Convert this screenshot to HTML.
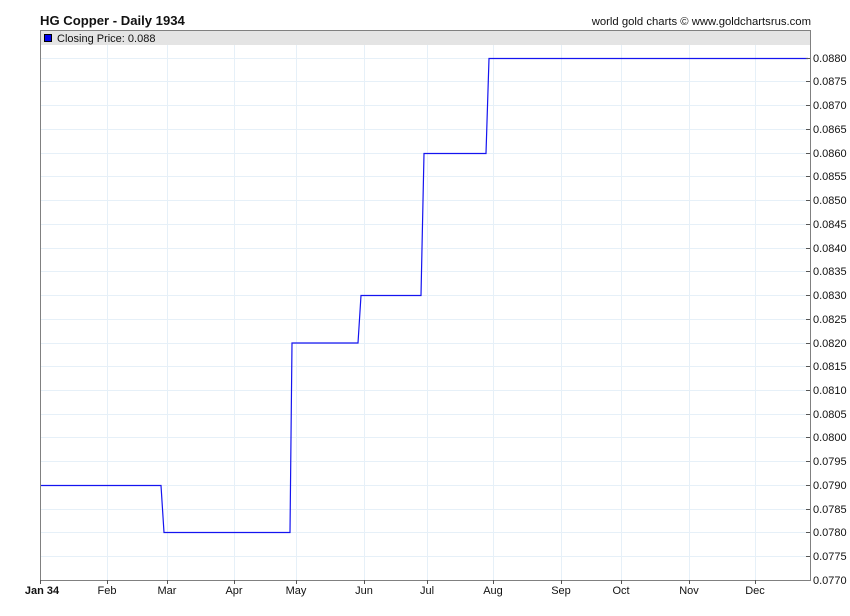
<!DOCTYPE html>
<html><head><meta charset="utf-8"><style>
html,body{margin:0;padding:0;background:#fff;width:850px;height:616px;overflow:hidden}
svg{display:block;font-family:"Liberation Sans",Arial,sans-serif}
</style></head><body>
<svg width="850" height="616" viewBox="0 0 850 616" xmlns="http://www.w3.org/2000/svg">
<text x="40" y="25" font-size="13.1" font-weight="bold" fill="#111">HG Copper - Daily 1934</text>
<text x="811" y="25" font-size="11.3" text-anchor="end" fill="#111">world gold charts © www.goldchartsrus.com</text>
<g stroke="#e6f0f8" stroke-width="1" shape-rendering="crispEdges">
<line x1="107.5" y1="30" x2="107.5" y2="580"/><line x1="167.5" y1="30" x2="167.5" y2="580"/>
<line x1="234.5" y1="30" x2="234.5" y2="580"/><line x1="296.5" y1="30" x2="296.5" y2="580"/>
<line x1="364.5" y1="30" x2="364.5" y2="580"/><line x1="427.5" y1="30" x2="427.5" y2="580"/>
<line x1="493.5" y1="30" x2="493.5" y2="580"/><line x1="561.5" y1="30" x2="561.5" y2="580"/>
<line x1="621.5" y1="30" x2="621.5" y2="580"/><line x1="689.5" y1="30" x2="689.5" y2="580"/>
<line x1="755.5" y1="30" x2="755.5" y2="580"/>
</g>
<rect x="41" y="31" width="769" height="14" fill="#e4e4e4"/>
<rect x="44.5" y="34.5" width="7" height="7" fill="#0000ee" stroke="#000" stroke-width="1"/>
<text x="57" y="42" font-size="11" fill="#111">Closing Price: 0.088</text>
<g stroke="#e6f0f8" shape-rendering="crispEdges">
<line x1="41" x2="810" y1="58.5" y2="58.5"/><line x1="41" x2="810" y1="81.5" y2="81.5"/><line x1="41" x2="810" y1="105.5" y2="105.5"/><line x1="41" x2="810" y1="129.5" y2="129.5"/><line x1="41" x2="810" y1="153.5" y2="153.5"/><line x1="41" x2="810" y1="176.5" y2="176.5"/><line x1="41" x2="810" y1="200.5" y2="200.5"/><line x1="41" x2="810" y1="224.5" y2="224.5"/><line x1="41" x2="810" y1="248.5" y2="248.5"/><line x1="41" x2="810" y1="271.5" y2="271.5"/><line x1="41" x2="810" y1="295.5" y2="295.5"/><line x1="41" x2="810" y1="319.5" y2="319.5"/><line x1="41" x2="810" y1="343.5" y2="343.5"/><line x1="41" x2="810" y1="366.5" y2="366.5"/><line x1="41" x2="810" y1="390.5" y2="390.5"/><line x1="41" x2="810" y1="414.5" y2="414.5"/><line x1="41" x2="810" y1="437.5" y2="437.5"/><line x1="41" x2="810" y1="461.5" y2="461.5"/><line x1="41" x2="810" y1="485.5" y2="485.5"/><line x1="41" x2="810" y1="509.5" y2="509.5"/><line x1="41" x2="810" y1="532.5" y2="532.5"/><line x1="41" x2="810" y1="556.5" y2="556.5"/>
</g>
<path d="M40.5 30.5 V580.5 H810.5 V30.5 Z" fill="none" stroke="#808080" stroke-width="1" shape-rendering="crispEdges"/>
<polyline points="41,485.5 161,485.5 164,532.5 290,532.5 292,343 358,343 361,295.5 421,295.5 424,153.5 486,153.5 489,58.5 808,58.5" fill="none" stroke="#1414f0" stroke-width="1.2"/>
<g stroke="#555" shape-rendering="crispEdges">
<line x1="40.5" y1="580" x2="40.5" y2="584"/><line x1="107.5" y1="580" x2="107.5" y2="584"/><line x1="167.5" y1="580" x2="167.5" y2="584"/><line x1="234.5" y1="580" x2="234.5" y2="584"/><line x1="296.5" y1="580" x2="296.5" y2="584"/><line x1="364.5" y1="580" x2="364.5" y2="584"/><line x1="427.5" y1="580" x2="427.5" y2="584"/><line x1="493.5" y1="580" x2="493.5" y2="584"/><line x1="561.5" y1="580" x2="561.5" y2="584"/><line x1="621.5" y1="580" x2="621.5" y2="584"/><line x1="689.5" y1="580" x2="689.5" y2="584"/><line x1="755.5" y1="580" x2="755.5" y2="584"/>
</g>
<g font-size="11" fill="#111" text-anchor="middle">
<text x="42" y="594" font-weight="bold">Jan 34</text><text x="107" y="594">Feb</text><text x="167" y="594">Mar</text><text x="234" y="594">Apr</text><text x="296" y="594">May</text><text x="364" y="594">Jun</text><text x="427" y="594">Jul</text><text x="493" y="594">Aug</text><text x="561" y="594">Sep</text><text x="621" y="594">Oct</text><text x="689" y="594">Nov</text><text x="755" y="594">Dec</text>
</g>
<g font-size="11" fill="#111">
<text x="813" y="62">0.0880</text><text x="813" y="85">0.0875</text><text x="813" y="109">0.0870</text><text x="813" y="133">0.0865</text><text x="813" y="157">0.0860</text><text x="813" y="180">0.0855</text><text x="813" y="204">0.0850</text><text x="813" y="228">0.0845</text><text x="813" y="252">0.0840</text><text x="813" y="275">0.0835</text><text x="813" y="299">0.0830</text><text x="813" y="323">0.0825</text><text x="813" y="347">0.0820</text><text x="813" y="370">0.0815</text><text x="813" y="394">0.0810</text><text x="813" y="418">0.0805</text><text x="813" y="441">0.0800</text><text x="813" y="465">0.0795</text><text x="813" y="489">0.0790</text><text x="813" y="513">0.0785</text><text x="813" y="536">0.0780</text><text x="813" y="560">0.0775</text><text x="813" y="584">0.0770</text>
</g>
<g stroke="#555" shape-rendering="crispEdges">
<line x1="806" x2="810" y1="58.5" y2="58.5"/><line x1="806" x2="810" y1="81.5" y2="81.5"/><line x1="806" x2="810" y1="105.5" y2="105.5"/><line x1="806" x2="810" y1="129.5" y2="129.5"/><line x1="806" x2="810" y1="153.5" y2="153.5"/><line x1="806" x2="810" y1="176.5" y2="176.5"/><line x1="806" x2="810" y1="200.5" y2="200.5"/><line x1="806" x2="810" y1="224.5" y2="224.5"/><line x1="806" x2="810" y1="248.5" y2="248.5"/><line x1="806" x2="810" y1="271.5" y2="271.5"/><line x1="806" x2="810" y1="295.5" y2="295.5"/><line x1="806" x2="810" y1="319.5" y2="319.5"/><line x1="806" x2="810" y1="343.5" y2="343.5"/><line x1="806" x2="810" y1="366.5" y2="366.5"/><line x1="806" x2="810" y1="390.5" y2="390.5"/><line x1="806" x2="810" y1="414.5" y2="414.5"/><line x1="806" x2="810" y1="437.5" y2="437.5"/><line x1="806" x2="810" y1="461.5" y2="461.5"/><line x1="806" x2="810" y1="485.5" y2="485.5"/><line x1="806" x2="810" y1="509.5" y2="509.5"/><line x1="806" x2="810" y1="532.5" y2="532.5"/><line x1="806" x2="810" y1="556.5" y2="556.5"/>
</g>
</svg>
</body></html>
